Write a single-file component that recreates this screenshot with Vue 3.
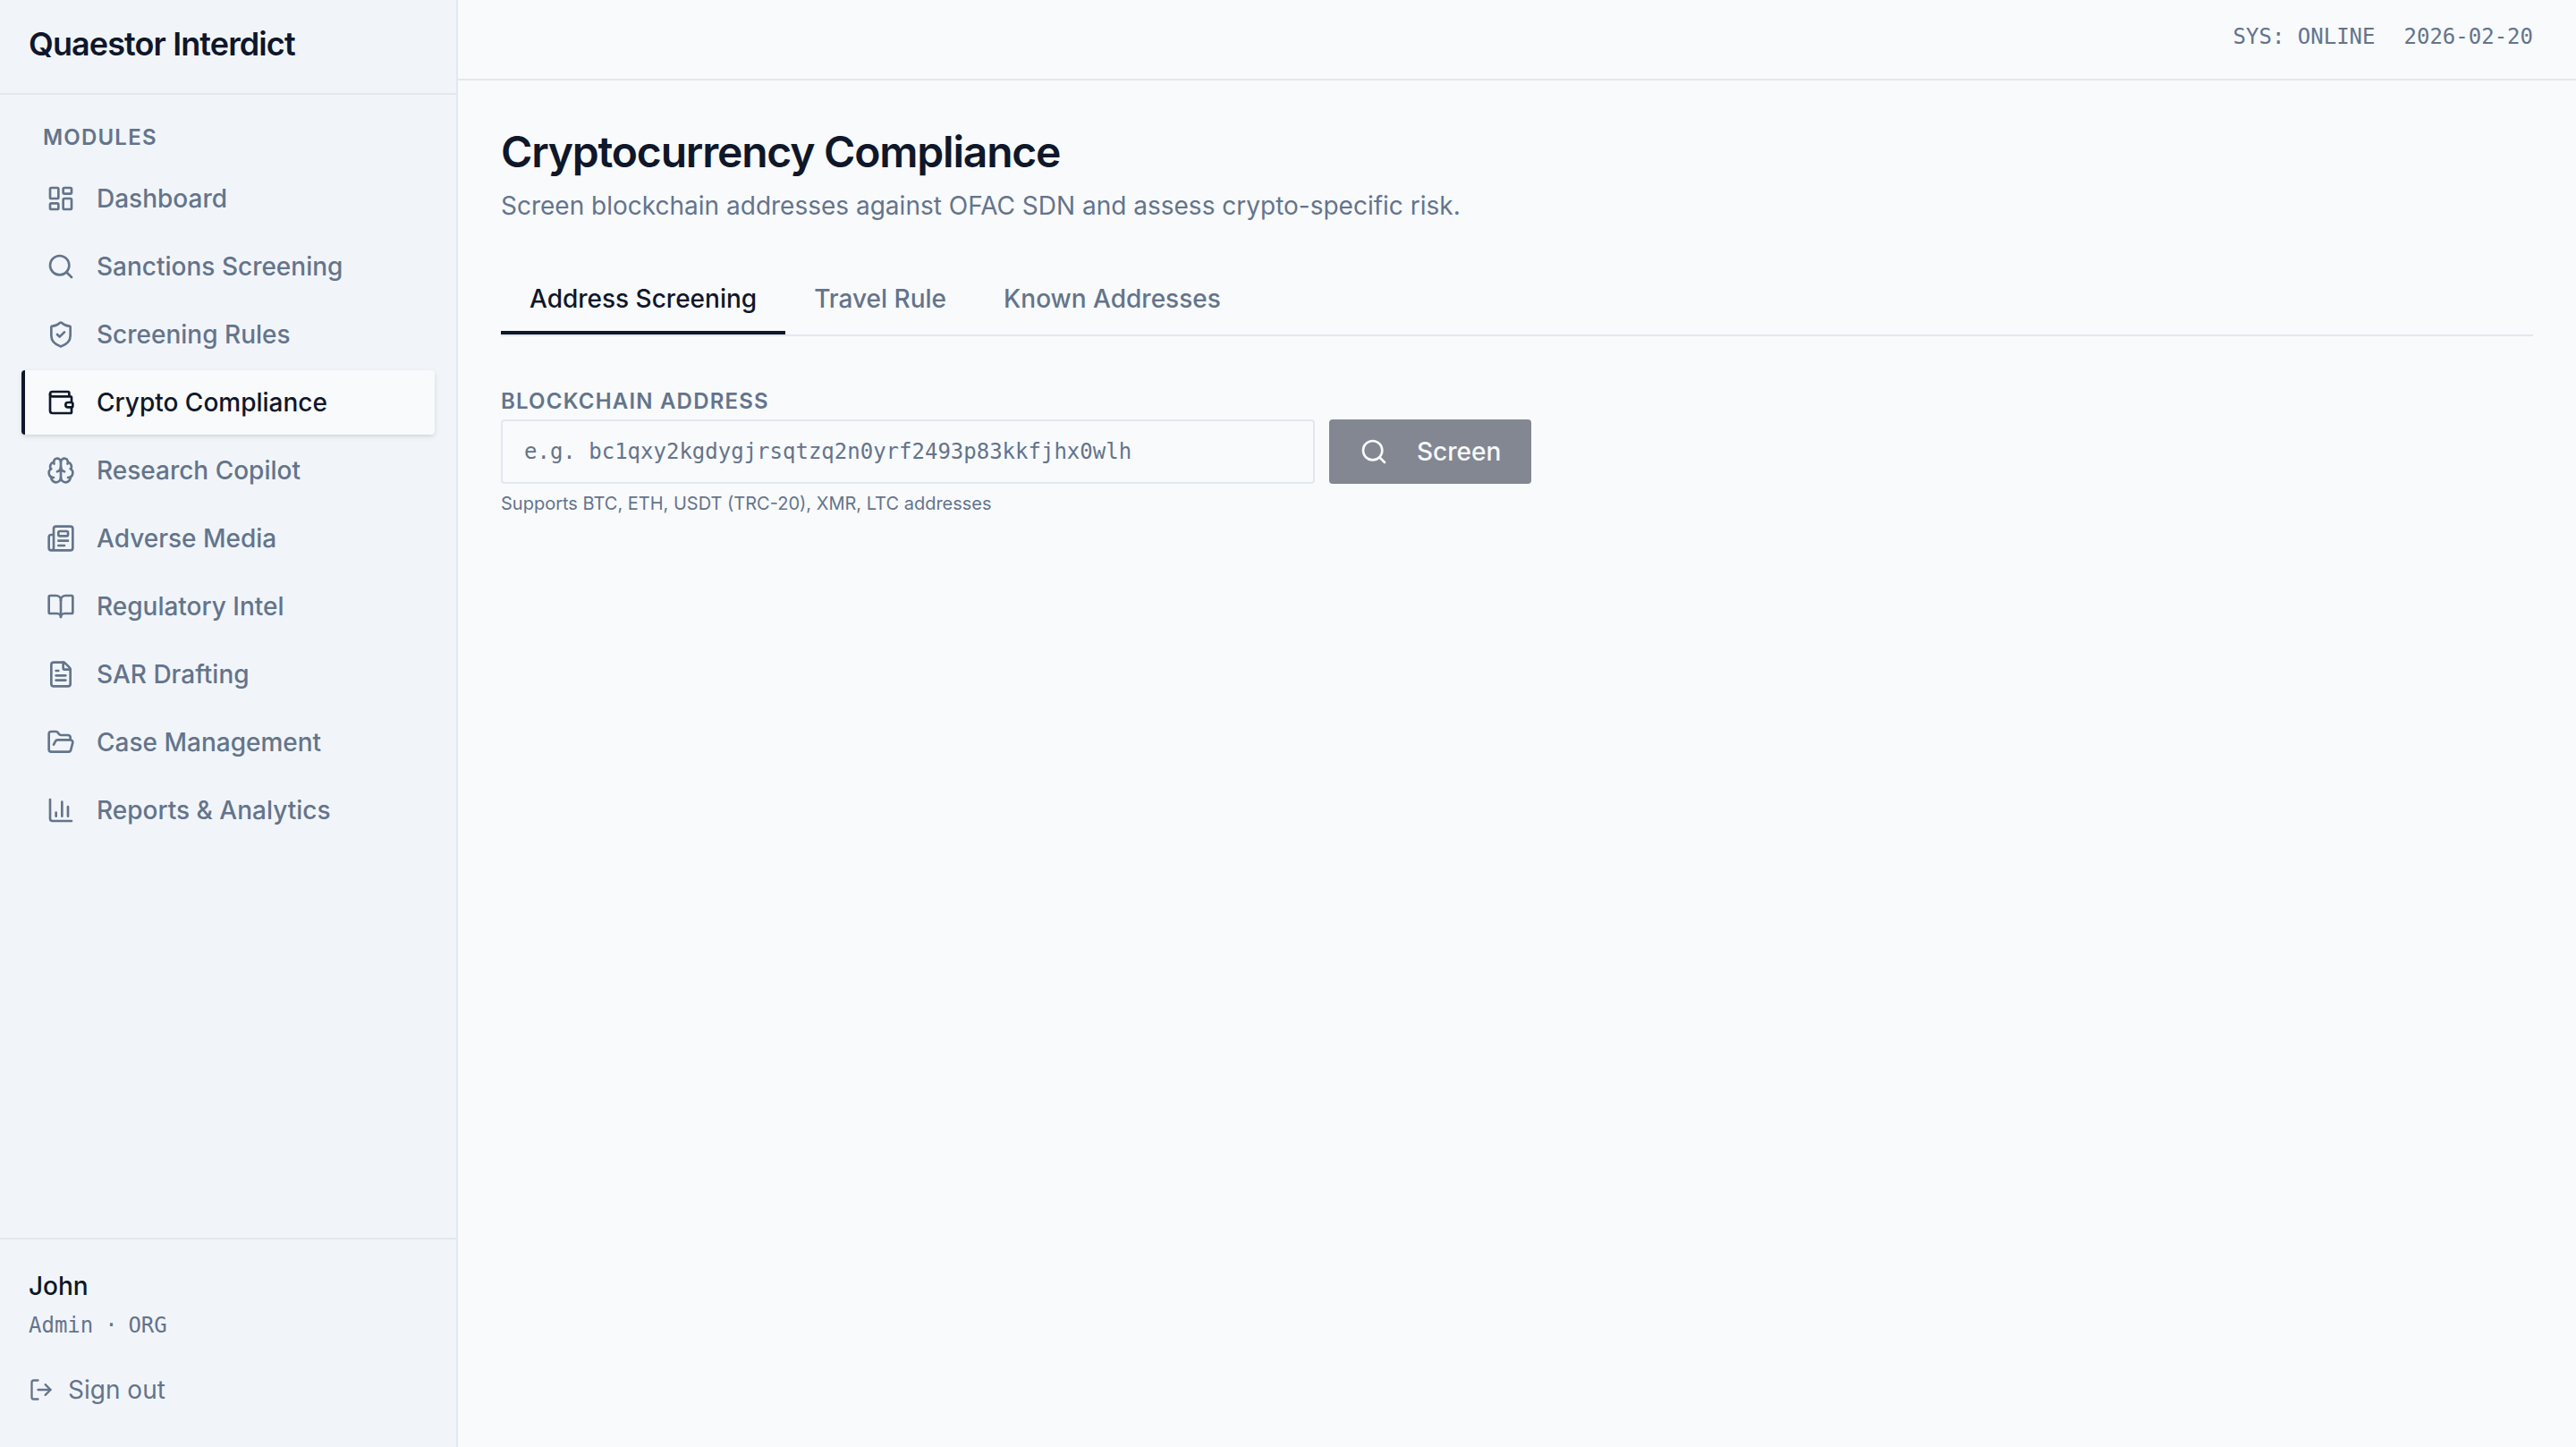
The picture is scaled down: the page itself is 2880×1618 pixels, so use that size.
<script setup>
import { ref } from 'vue'

const modules = [
  {
    name: 'Dashboard',
    rects: [
      { x: 3, y: 3, width: 7, height: 9 },
      { x: 14, y: 3, width: 7, height: 5 },
      { x: 14, y: 12, width: 7, height: 9 },
      { x: 3, y: 16, width: 7, height: 5 },
    ],
    paths: [],
  },
  {
    name: 'Sanctions Screening',
    paths: ['m21 21-4.34-4.34', 'M19 11a8 8 0 1 1-16 0 8 8 0 0 1 16 0z'],
  },
  {
    name: 'Screening Rules',
    paths: [
      'M20 13c0 5-3.5 7.5-7.66 8.95a1 1 0 0 1-.67-.01C7.5 20.5 4 18 4 13V6a1 1 0 0 1 1-1c2 0 4.5-1.2 6.24-2.72a1.17 1.17 0 0 1 1.52 0C14.51 3.81 17 5 19 5a1 1 0 0 1 1 1z',
      'm9 12 2 2 4-4',
    ],
  },
  {
    name: 'Crypto Compliance',
    paths: [
      'M19 7V4a1 1 0 0 0-1-1H5a2 2 0 0 0 0 4h15a1 1 0 0 1 1 1v4h-3a2 2 0 0 0 0 4h3a1 1 0 0 0 1-1v-2a1 1 0 0 0-1-1',
      'M3 5v14a2 2 0 0 0 2 2h15a1 1 0 0 0 1-1v-4',
    ],
  },
  {
    name: 'Research Copilot',
    paths: [
      'M12 18V5',
      'M15 13a4.17 4.17 0 0 1-3-4 4.17 4.17 0 0 1-3 4',
      'M17.598 6.5A3 3 0 1 0 12 5a3 3 0 1 0-5.598 1.5',
      'M17.997 5.125a4 4 0 0 1 2.526 5.77',
      'M18 18a4 4 0 0 0 2-7.464',
      'M19.967 17.483A4 4 0 1 1 12 18a4 4 0 1 1-7.967-.517',
      'M6 18a4 4 0 0 1-2-7.464',
      'M6.003 5.125a4 4 0 0 0-2.526 5.77',
    ],
  },
  {
    name: 'Adverse Media',
    rects: [{ x: 10, y: 6, width: 8, height: 4 }],
    paths: [
      'M15 18h-5',
      'M18 14h-8',
      'M4 22h16a2 2 0 0 0 2-2V4a2 2 0 0 0-2-2H8a2 2 0 0 0-2 2v16a2 2 0 0 1-4 0v-9a2 2 0 0 1 2-2h2',
    ],
  },
  {
    name: 'Regulatory Intel',
    paths: [
      'M12 7v14',
      'M3 18a1 1 0 0 1-1-1V4a1 1 0 0 1 1-1h5a4 4 0 0 1 4 4 4 4 0 0 1 4-4h5a1 1 0 0 1 1 1v13a1 1 0 0 1-1 1h-6a3 3 0 0 0-3 3 3 3 0 0 0-3-3z',
    ],
  },
  {
    name: 'SAR Drafting',
    paths: [
      'M6 22a2 2 0 0 1-2-2V4a2 2 0 0 1 2-2h8a2.4 2.4 0 0 1 1.704.706l3.588 3.588A2.4 2.4 0 0 1 20 8v12a2 2 0 0 1-2 2z',
      'M14 2v5a1 1 0 0 0 1 1h5',
      'M10 9H8',
      'M16 13H8',
      'M16 17H8',
    ],
  },
  {
    name: 'Case Management',
    paths: [
      'm6 14 1.5-2.9A2 2 0 0 1 9.24 10H20a2 2 0 0 1 1.94 2.5l-1.54 6a2 2 0 0 1-1.95 1.5H4a2 2 0 0 1-2-2V5a2 2 0 0 1 2-2h3.9a2 2 0 0 1 1.69.9l.81 1.2a2 2 0 0 0 1.67.9H18a2 2 0 0 1 2 2v2',
    ],
  },
  {
    name: 'Reports & Analytics',
    paths: ['M3 3v16a2 2 0 0 0 2 2h16', 'M18 17V9', 'M13 17V5', 'M8 17v-3'],
  },
]

const tabs = ['Address Screening', 'Travel Rule', 'Known Addresses']

const activeModule = ref('Crypto Compliance')
const activeTab = ref('Address Screening')
const address = ref('')
</script>

<template>
  <div class="layout">
    <aside class="sidebar">
      <div class="brand">Quaestor Interdict</div>

      <nav class="nav">
        <div class="nav-label">Modules</div>
        <a
          v-for="item in modules"
          :key="item.name"
          class="nav-item"
          :class="{ active: item.name === activeModule }"
          @click="activeModule = item.name"
        >
          <svg class="icon" viewBox="0 0 24 24">
            <rect v-for="(r, i) in item.rects" :key="'r' + i" v-bind="r" rx="1" />
            <path v-for="(d, i) in item.paths" :key="i" :d="d" />
          </svg>
          <span>{{ item.name }}</span>
        </a>
      </nav>

      <div class="user">
        <div class="user-name">John</div>
        <div class="user-role">Admin<span class="dot"> · </span>ORG</div>
        <button class="sign-out" type="button">
          <svg class="icon icon-small" viewBox="0 0 24 24">
            <path d="m16 17 5-5-5-5" />
            <path d="M21 12H9" />
            <path d="M9 21H5a2 2 0 0 1-2-2V5a2 2 0 0 1 2-2h4" />
          </svg>
          <span>Sign out</span>
        </button>
      </div>
    </aside>

    <div class="content">
      <header class="topbar">
        <span>SYS: ONLINE</span>
        <span>2026-02-20</span>
      </header>

      <main class="page">
        <h1>Cryptocurrency Compliance</h1>
        <p class="subtitle">Screen blockchain addresses against OFAC SDN and assess crypto-specific risk.</p>

        <div class="tabs">
          <button
            v-for="tab in tabs"
            :key="tab"
            type="button"
            class="tab"
            :class="{ active: tab === activeTab }"
            @click="activeTab = tab"
          >
            {{ tab }}
          </button>
        </div>

        <form class="screen-form" @submit.prevent>
          <label for="address">Blockchain Address</label>
          <div class="form-row">
            <input
              id="address"
              v-model="address"
              type="text"
              placeholder="e.g. bc1qxy2kgdygjrsqtzq2n0yrf2493p83kkfjhx0wlh"
            />
            <button class="submit" type="submit" :disabled="!address">
              <svg class="icon" viewBox="0 0 24 24">
                <path d="m21 21-4.34-4.34" />
                <circle cx="11" cy="11" r="8" />
              </svg>
              <span>Screen</span>
            </button>
          </div>
          <p class="hint">Supports BTC, ETH, USDT (TRC-20), XMR, LTC addresses</p>
        </form>
      </main>
    </div>
  </div>
</template>

<style>
body {
  background: #f8fafc;
}
</style>

<style scoped>
.layout {
  display: flex;
  height: 100vh;
  background: #f8fafc;
  color: #0f172a;
  font-family: Inter, sans-serif;
  font-size: 28px;
  line-height: 40px;
}

.layout *,
.layout {
  box-sizing: border-box;
}

button {
  font: inherit;
  color: inherit;
  letter-spacing: inherit;
  background: none;
  border: 0;
  padding: 0;
}

.icon {
  width: 32px;
  height: 32px;
  flex-shrink: 0;
  fill: none;
  stroke: currentColor;
  stroke-width: 2;
  stroke-linecap: round;
  stroke-linejoin: round;
}

.icon-small {
  width: 28px;
  height: 28px;
}

.sidebar {
  width: 512px;
  flex-shrink: 0;
  display: flex;
  flex-direction: column;
  background: #f1f5f9;
  border-right: 2px solid #e2e8f0;
}

.brand {
  padding: 24px 32px 30px;
  border-bottom: 2px solid #e2e8f0;
  font-size: 36px;
  font-weight: 600;
  line-height: 50px;
  letter-spacing: -0.025em;
}

.nav {
  flex: 1;
  display: flex;
  flex-direction: column;
  gap: 4px;
  padding: 32px 24px;
}

.nav-label {
  padding: 0 24px;
  margin-bottom: 12px;
  font-size: 24px;
  font-weight: 600;
  line-height: 32px;
  letter-spacing: 0.05em;
  text-transform: uppercase;
  color: #64748b;
}

.nav-item {
  display: flex;
  align-items: center;
  gap: 24px;
  height: 72px;
  padding: 0 24px;
  border-left: 4px solid transparent;
  border-radius: 4px;
  font-weight: 500;
  color: #64748b;
  cursor: pointer;
}

.nav-item.active {
  background: #f8fafc;
  border-left-color: #0f172a;
  color: #0f172a;
  box-shadow: 0 2px 6px rgba(0, 0, 0, 0.1), 0 2px 4px -2px rgba(0, 0, 0, 0.1);
}

.user {
  height: 234px;
  padding: 32px;
  border-top: 2px solid #e2e8f0;
}

.user-name {
  font-weight: 500;
}

.user-role {
  margin-top: 8px;
  font-family: 'DejaVu Sans Mono', monospace;
  font-size: 24px;
  line-height: 32px;
  color: #64748b;
}

.dot {
  white-space: pre;
  letter-spacing: -1.4px;
}

.sign-out {
  display: flex;
  align-items: center;
  gap: 16px;
  margin-top: 36px;
  color: #64748b;
}

.content {
  flex: 1;
  min-width: 0;
}

.topbar {
  display: flex;
  justify-content: flex-end;
  gap: 32px;
  height: 90px;
  padding: 24px 48px 0;
  border-bottom: 2px solid #e2e8f0;
  font-family: 'DejaVu Sans Mono', monospace;
  font-size: 24px;
  line-height: 34px;
  color: #64748b;
}

.page {
  padding: 48px;
}

h1 {
  margin: 0;
  font-size: 48px;
  font-weight: 600;
  line-height: 64px;
  letter-spacing: -0.025em;
}

.subtitle {
  margin: 8px 0 48px;
  color: #64748b;
}

.tabs {
  display: flex;
  border-bottom: 2px solid #e2e8f0;
}

.tab {
  padding: 16px 32px;
  border-bottom: 4px solid transparent;
  font-weight: 500;
  color: #64748b;
}

.tab.active {
  border-bottom-color: #0f172a;
  color: #0f172a;
}

.screen-form {
  display: flex;
  flex-direction: column;
  margin-top: 57px;
}

label {
  margin-bottom: 4px;
  font-size: 24px;
  font-weight: 600;
  line-height: 32px;
  letter-spacing: 0.05em;
  text-transform: uppercase;
  color: #64748b;
}

.form-row {
  display: flex;
  gap: 16px;
}

input {
  width: 910px;
  height: 72px;
  padding: 0 24px;
  border: 2px solid #e2e8f0;
  border-radius: 4px;
  background: transparent;
  font-family: 'DejaVu Sans Mono', monospace;
  font-size: 24px;
  color: #0f172a;
}

input::placeholder {
  color: #64748b;
}

.submit {
  display: flex;
  align-items: center;
  gap: 32px;
  height: 72px;
  padding: 0 34px;
  border-radius: 4px;
  background: #0f172a;
  color: #f8fafc;
  font-weight: 500;
}

.submit:disabled {
  opacity: 0.5;
}

.hint {
  margin: 8px 0 0;
  font-size: 20px;
  line-height: 28px;
  color: #64748b;
}
</style>
